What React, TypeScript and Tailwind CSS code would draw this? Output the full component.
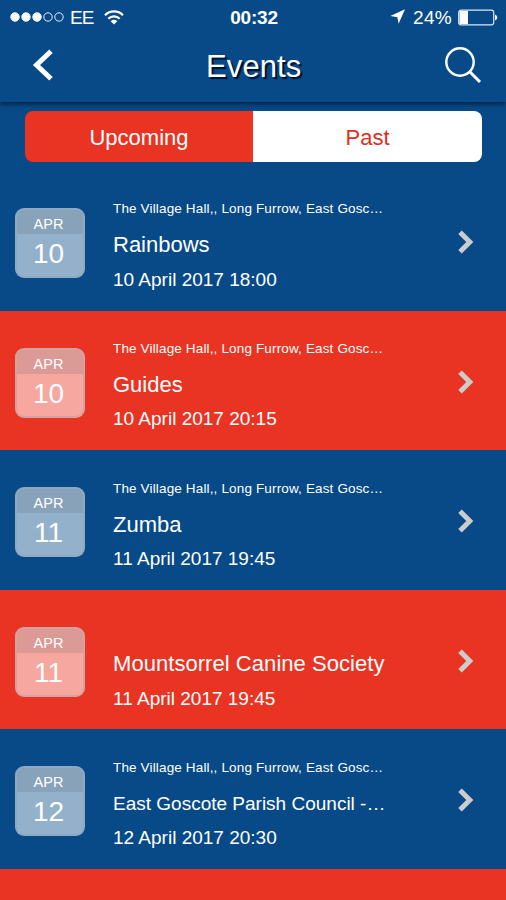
type EventItem = {
  month: string;
  day: string;
  location?: string;
  title: string;
  titleClass: string;
  date: string;
};

const address = "The Village Hall,, Long Furrow, East Gosc…";

const events: EventItem[] = [
  { month: "APR", day: "10", location: address, title: "Rainbows", titleClass: "text-[22px]", date: "10 April 2017 18:00" },
  { month: "APR", day: "10", location: address, title: "Guides", titleClass: "text-[22px]", date: "10 April 2017 20:15" },
  { month: "APR", day: "11", location: address, title: "Zumba", titleClass: "text-[22px]", date: "11 April 2017 19:45" },
  { month: "APR", day: "11", title: "Mountsorrel Canine Society", titleClass: "text-[22px] tracking-[0.05px]", date: "11 April 2017 19:45" },
  { month: "APR", day: "12", location: address, title: "East Goscote Parish Council -…", titleClass: "text-[19px]", date: "12 April 2017 20:30" },
];

const StatusBar = () => (
  <div className="flex h-[34px] items-center pl-[10px] pr-[8px] text-[19px] leading-none">
    <div className="flex flex-1 items-center">
      <svg className="-mt-px" width="54" height="12" viewBox="0 0 54 12" fill="white" stroke="white">
        <circle cx="5" cy="6" r="4.2" />
        <circle cx="16" cy="6" r="4.2" />
        <circle cx="27" cy="6" r="4.2" />
        <circle cx="38" cy="6" r="4.2" fill="none" strokeWidth="0.9" />
        <circle cx="49" cy="6" r="4.2" fill="none" strokeWidth="0.9" />
      </svg>
      <span className="ml-[6px] tracking-[-0.8px]">EE</span>
      <svg className="-mt-px ml-[10px]" width="20" height="16" viewBox="0 0 20 16" fill="none" stroke="white" strokeWidth="2.2">
        <path d="M1 6.2a12.6 12.6 0 0 1 18 0" />
        <path d="M4.3 9.7a8 8 0 0 1 11.4 0" />
        <path d="M10 15.6l-3.3-3.4a4.7 4.7 0 0 1 6.6 0z" fill="white" stroke="none" />
      </svg>
    </div>
    <span className="font-bold tracking-[-0.2px]">00:32</span>
    <div className="flex flex-1 items-center justify-end">
      <svg className="-mt-px" width="15" height="15" viewBox="0 0 15 15" fill="white">
        <path d="M15 .2 8.6 14.8 7.4 8.2.3 7z" />
      </svg>
      <span className="ml-[8px] tracking-[0.3px]">24%</span>
      <svg className="ml-[6px]" width="40" height="17" viewBox="0 0 40 17">
        <rect x="0.7" y="1.2" width="35" height="14.6" rx="2.2" fill="none" stroke="#dce6f2" strokeWidth="1.2" />
        <rect x="1.5" y="2" width="8.5" height="13" fill="white" />
        <path d="M37 5.5q2.3 1 2.3 3t-2.3 3z" fill="white" />
      </svg>
    </div>
  </div>
);

const Header = () => (
  <header className="relative h-[102px] shadow-[0_2px_5px_rgba(0,15,40,0.75)]">
    <StatusBar />
    <div className="flex h-[64px] items-center pl-[32px] pr-[24px]">
      <svg className="-mt-[2px]" width="38" height="34" viewBox="0 0 38 34" fill="none" stroke="white" strokeWidth="5">
        <path d="M19 3.2 4.5 17 19 30.8" />
      </svg>
      <h1 className="ml-[136px] text-[31px] leading-none tracking-[0.1px] [text-shadow:2px_2px_1px_#001025]">Events</h1>
      <svg className="-mt-[2px] ml-auto" width="38" height="38" viewBox="0 0 38 38" fill="none" stroke="white" strokeWidth="2.4">
        <circle cx="16" cy="16" r="13.7" />
        <path d="m25.5 25.5 10.5 10.5" strokeWidth="3" />
      </svg>
    </div>
  </header>
);

const DateBadge = ({ month, day }: { month: string; day: string }) => (
  <div className="h-[70px] w-[70px] shrink-0 overflow-hidden rounded-[9px] border-2 border-[#8498a8]/30 bg-white/57 text-center">
    <div className="h-[24px] bg-[#405060]/15 pr-[2px] pt-[6px] text-[14.5px] leading-[17px]">{month}</div>
    <div className="pr-[2px] pt-[3px] text-[28px] leading-[34px]">{day}</div>
  </div>
);

const EventRow = ({ event, odd }: { event: EventItem; odd: boolean }) => (
  <li className={`flex h-[139.6px] pl-[14.5px] ${odd ? "bg-[#e93423]" : "bg-[#084a88]"}`}>
    <div className="pt-[37px]">
      <DateBadge month={event.month} day={event.day} />
    </div>
    <div className="ml-[28.5px] w-[300px] whitespace-nowrap pt-[29.4px]">
      <p className="h-[18px] text-[13.5px] leading-[18px] tracking-[0.15px]">{event.location}</p>
      <p className={`mt-[13px] h-[28px] leading-[28px] ${event.titleClass}`}>{event.title}</p>
      <p className="mt-[8.4px] text-[19px] leading-[24px]">{event.date}</p>
    </div>
    <svg className="ml-[44px] mt-[58px]" width="19" height="26" viewBox="0 0 19 26" fill="none" stroke="#ccc" strokeWidth="5">
      <path d="M3 3.2 12.8 13 3 22.8" />
    </svg>
  </li>
);

const App = () => {
  return (
    <div className="h-[900px] w-[506px] overflow-hidden bg-[#084a88] font-['Liberation_Sans',Arial,sans-serif] text-white">
      <Header />

      {/* Upcoming / Past switch */}
      <div className="flex h-[69px] pl-[25px] pr-[24px] pt-[9px]">
        <div className="flex h-[51px] w-full overflow-hidden rounded-[8px] text-[22px]">
          <button className="w-[228px] bg-[#e93423] pt-[2px]">Upcoming</button>
          <button className="flex-1 bg-white pt-[2px] text-[#dd3024]">Past</button>
        </div>
      </div>

      <ul>
        {events.map((event, i) => (
          <EventRow key={i} event={event} odd={i % 2 === 1} />
        ))}
        <li className="h-[40px] bg-[#e93423]" />
      </ul>
    </div>
  );
};

export default App;
